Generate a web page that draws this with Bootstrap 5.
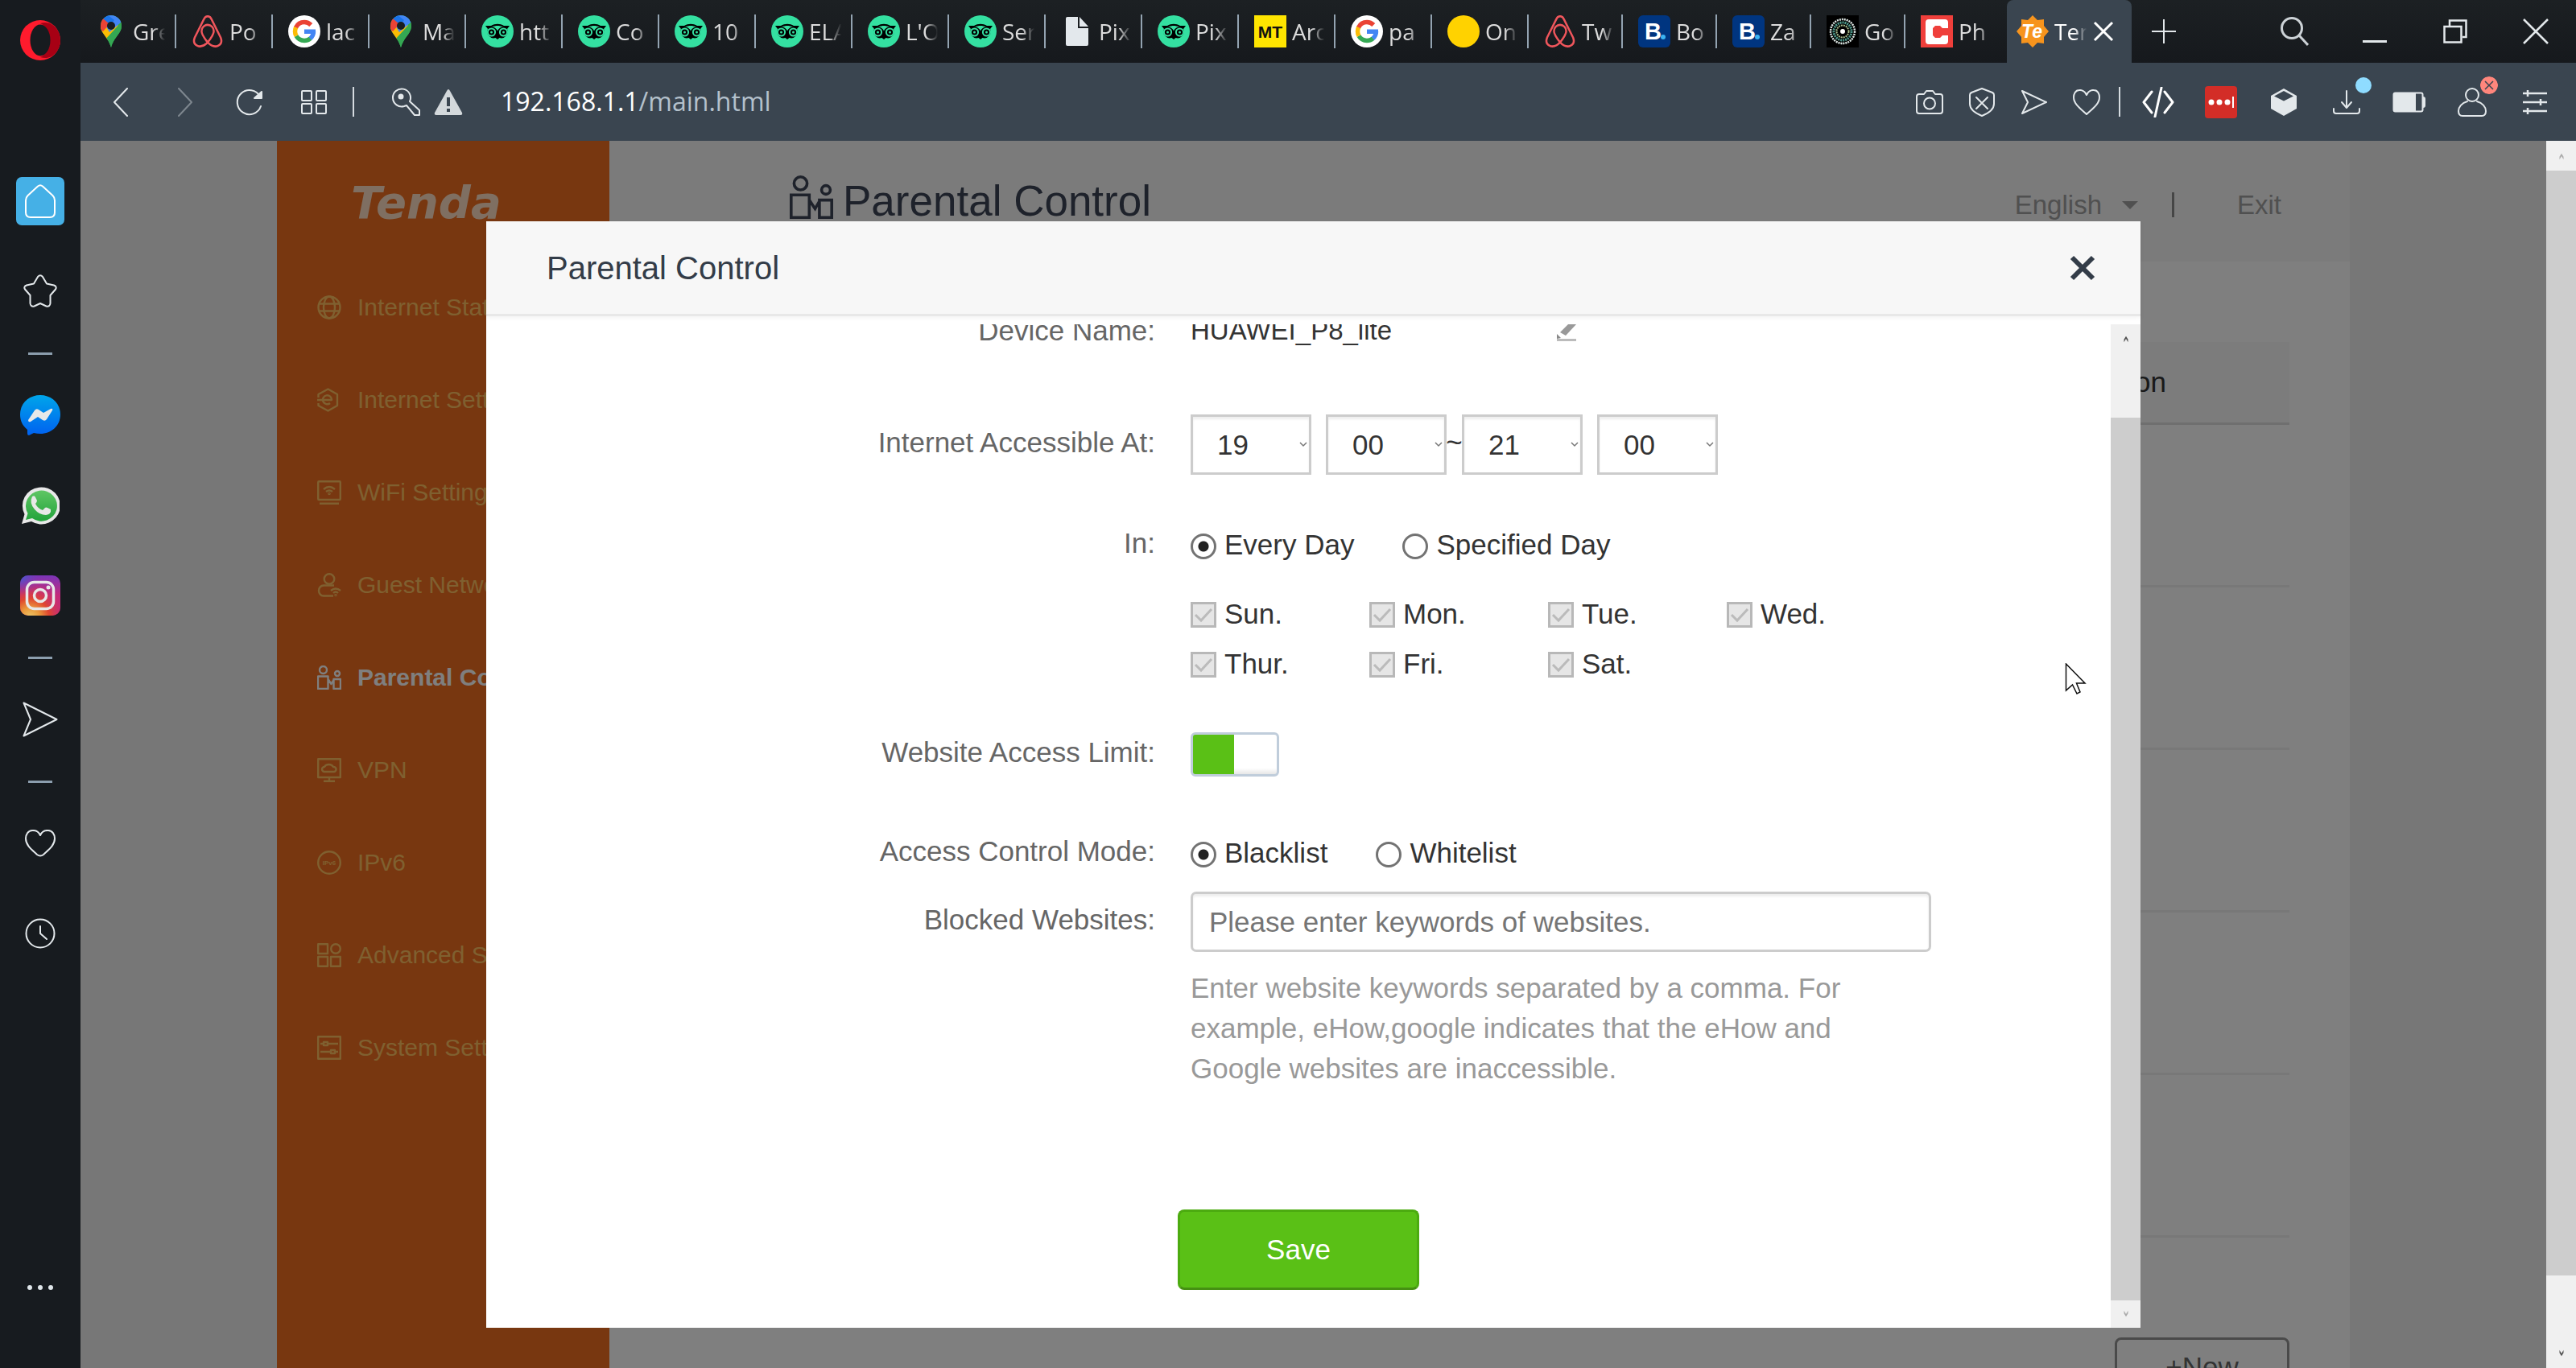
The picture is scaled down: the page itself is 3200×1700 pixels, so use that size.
<!DOCTYPE html>
<html lang="en">
<head>
<meta charset="utf-8">
<meta name="viewport" content="width=device-width, initial-scale=1">
<title>Tenda | Parental Control</title>
<link href="https://cdn.jsdelivr.net/npm/bootstrap@5.3.0/dist/css/bootstrap.min.css" rel="stylesheet">
<style>
  :root { --chrome: #3a4550; --ink: #e3e8eb; }
  body { font-family: "Liberation Sans", Arial, sans-serif; font-size: 35px; line-height: 50px; background: #171b1f; color: #333; }
  svg { display: block; flex: none; }
  button { font: inherit; }
  .plain-btn { background: none; border: 0; padding: 0; color: inherit; display: flex; align-items: center; justify-content: center; flex: none; }
  .line-icon { fill: none; stroke: var(--ink); stroke-width: 2; stroke-linejoin: round; stroke-linecap: round; }

  /* browser side bar */
  .side-rail { width: 100px; background: #171b1f; padding-bottom: 44px; }
  .rail-logo { height: 100px; }
  .rail-item { width: 100px; height: 112px; }
  .rail-item.home { height: 150px; margin-top: 75px; margin-bottom: -19px; }
  .home-tile { width: 60px; height: 60px; border-radius: 7px; background: #45b0e6; display: flex; align-items: center; justify-content: center; }
  .rail-rule { width: 30px; height: 3px; margin: 20px 0 19px; background: #8c9eae; flex: none; }

  /* tab strip */
  .tab-strip { height: 78px; background: linear-gradient(#1c2023, #16191d); font-family: "Open Sans", "Noto Sans", sans-serif; font-size: 28px; line-height: 40px; color: #dcdcdc; }
  .site-tab { width: 120px; padding-left: 19px; gap: 7px; position: relative; flex: none; color: inherit; text-decoration: none; }
  .site-tab::after { content: ""; position: absolute; right: 0; top: 18px; height: 42px; width: 2px; background: #93a3b1; }
  .site-tab:first-child { width: 119px; padding-left: 18px; }
  .site-tab.tight { width: 117px; }
  .site-tab.last { width: 126px; }
  .site-tab.current { width: 155px; padding-left: 12px; background: var(--chrome); color: #fff; border-radius: 8px 8px 0 0; }
  .site-tab.last::after, .site-tab.current::after { display: none; }
  .tab-text { width: 41px; overflow: hidden; white-space: nowrap; -webkit-mask-image: linear-gradient(90deg, #000 60%, transparent 98%); mask-image: linear-gradient(90deg, #000 60%, transparent 98%); }
  .add-tab { width: 80px; }
  .win-btn { width: 100px; }

  /* address bar */
  .address-bar { height: 97px; background: var(--chrome); padding: 0 12px 0 10px; }
  .nav-btn { width: 80px; height: 97px; }
  .page-btn { width: 65px; height: 97px; }
  .ext-btn { width: 78px; height: 97px; position: relative; }
  .bar-rule { width: 2px; height: 37px; background: #d5dbe0; flex: none; }
  .key-btn { margin-left: 47px; }
  .warn-btn { margin-left: 16px; }
  .url-box { margin-left: 47px; font-family: "Open Sans", "Noto Sans", sans-serif; font-size: 32px; line-height: 44px; color: #fff; padding-bottom: 2px; }
  .url-box span { color: #b4c1cc; }
  .dot-badge { position: absolute; border-radius: 50%; }
  .dot-badge.blue { width: 20px; height: 20px; left: 50px; top: 18px; background: #8fdcff; }
  .dot-badge.red { left: 49px; top: 17px; }

  /* router page */
  .web-view { background: #efefef; min-height: 0; }
  .router { max-width: 2575px; }
  .router-nav { width: 413px; background: #f06e20; }
  .brand-word { height: 150px; padding: 4px 0 0 92px; font-family: "DejaVu Sans", sans-serif; font-weight: 700; font-style: italic; font-size: 56px; line-height: 60px; color: #ffdfc4; }
  .menu-link { height: 115px; padding: 0 0 2px 50px; gap: 20px; font-size: 30px; line-height: 40px; white-space: nowrap; color: #ffc060; text-decoration: none; }
  .menu-link svg { fill: none; stroke: currentColor; stroke-width: 2.4; stroke-linejoin: round; }
  .menu-link.active { color: #fff; font-weight: 700; }
  .router-body { background: #fff; }
  .router-head { height: 150px; background: #f7f7f7; padding: 0 85px 0 224px; }
  .router-head h1 { font-size: 53px; line-height: 60px; color: #3c4456; }
  .head-icon { color: #3c4456; stroke-width: 2; margin-bottom: 10px; }
  .account-links { font-size: 33px; line-height: 40px; color: #a0a0a0; padding-top: 9px; }
  .account-links a { color: inherit; text-decoration: none; }
  .lang-caret { border: 10px solid transparent; border-top-color: #a0a0a0; border-bottom: 0; margin-left: 25px; }
  .account-rule { width: 3px; height: 31px; background: #8c8c8c; margin: 0 78px 0 42px; }
  .client-area { padding: 100px 75px 0; }
  .client-table { width: 100%; border-collapse: collapse; }
  .client-table th { height: 101px; background: #f8f8f8; border-bottom: 3px solid #dedede; font-weight: 400; text-align: center; padding: 0; }
  .client-table th:last-child { width: 460px; }
  .client-table td { height: 202px; border-bottom: 3px solid #f0f0f0; }
  .new-btn { width: 217px; height: 75px; margin-top: 124px; border: 3px solid #949494; border-radius: 8px; background: none; color: #666; padding: 0; }

  /* dialog */
  .shade { background: rgba(0, 0, 0, .5); padding: 100px 50px 50px; }
  .dialog { width: 100%; max-width: 2055px; height: 100%; background: #fff; }
  .dialog-head { height: 118px; background: #f7f7f7; border-bottom: 3px solid #e8e8e8; padding: 0 56px 0 75px; box-shadow: 0 2px 6px rgba(0, 0, 0, .05); }
  .dialog-head h2 { font-size: 40px; line-height: 50px; color: #333c48; }
  .dialog-body { margin-top: 10px; min-height: 0; }
  .dialog-form { margin-top: -17px; }
  .form-line { display: flex; gap: 44px; }
  .line-label { width: 831px; text-align: right; color: #666; flex: none; }
  .line-label.boxed { padding-top: 10px; }
  .line-label.choice { line-height: 58px; }
  .line-field { width: 920px; }
  .device-name { width: 455px; font-size: 33px; }
  .gap-a { margin-top: 79px; } .gap-b { margin-top: 56px; } .gap-c { margin-top: 54px; } .gap-d { margin-top: 64px; } .gap-e { margin-top: 17px; }
  .time-select { width: 150px; height: 75px; padding: 0 10px 0 30px; font-size: 35px; line-height: 50px; color: #333; border: 3px solid #ccc; border-radius: 0; appearance: none;
    background: #fff url("data:image/svg+xml,%3Csvg xmlns='http://www.w3.org/2000/svg' width='10' height='7'%3E%3Cpath d='M1 1l4 4 4-4' fill='none' stroke='%23777' stroke-width='1.5'/%3E%3C/svg%3E") no-repeat right 2px center; box-shadow: inset 0 3px 3px rgba(0, 0, 0, .07); }
  .time-select.minute { margin-left: 18px; }
  .tilde { width: 19px; line-height: 70px; display: flex; justify-content: center; }
  .pick { display: flex; align-items: center; height: 62px; }
  .pick input { appearance: none; width: 32px; height: 32px; margin: 3px 10px 0 0; flex: none; background: #fff; border: 3px solid #737373; opacity: 1; }
  .pick input[type=radio] { border-radius: 50%; }
  .pick input[type=radio]:checked { background: radial-gradient(circle, #222 6px, #fff 7px); }
  .pick input[type=checkbox] { margin-top: 2px; border-color: #b8b8b8; background: #e6e6e6 url("data:image/svg+xml,%3Csvg xmlns='http://www.w3.org/2000/svg' width='26' height='26'%3E%3Cpath d='M3 13l7 7L23 6' fill='none' stroke='%23bbb' stroke-width='3'/%3E%3C/svg%3E") center no-repeat; }
  .mode-row { display: flex; gap: 60px; }
  .day-grid { display: grid; grid-template-columns: repeat(4, 222px); margin-top: 24px; }
  .limit-switch { appearance: none; display: block; width: 110px; height: 55px; margin: 0; border: 3px solid #c0cddb; border-radius: 6px; background: linear-gradient(90deg, #5ac016 51px, transparent 51px), linear-gradient(#fff 85%, #e6e6e6); }
  .site-box { display: block; width: 100%; height: 75px; padding: 0 20px; font-size: 35px; border: 3px solid #ccc; border-radius: 7px; box-shadow: inset 0 3px 3px rgba(0, 0, 0, .07); }
  .site-box::placeholder { color: #757575; opacity: 1; }
  .hint { max-width: 880px; margin: 20px 0 0; color: #999; }
  .save-btn { width: 300px; height: 100px; margin: 150px auto 0; display: block; padding: 0; color: #fff; background: #5ac016; border: 3px solid #4cab10; border-bottom-color: #459012; border-radius: 8px; }

  /* scroll bars */
  .bar-track { width: 37px; background: #f0f0f0; flex: none; color: #505050; }
  .bar-thumb { width: 37px; background: #cdcdcd; flex: 1 1 auto; }
  .track-end { height: 37px; display: flex; align-items: center; justify-content: center; flex: none; }
  .track-end.short { height: 34px; }
  .track-end.run-top { height: 116px; align-items: flex-start; padding-top: 13px; }
  .track-end.run-bottom { height: 115px; align-items: flex-end; padding-bottom: 13px; }
  .faint { color: #aaa; }
  .flip { transform: rotate(180deg); }
  .pointer { position: absolute; left: 2465px; top: 649px; }
</style>
<script src="https://cdn.jsdelivr.net/npm/bootstrap@5.3.0/dist/js/bootstrap.bundle.min.js"></script>
</head>
<body class="d-flex vh-100 overflow-hidden">

<svg width="0" height="0" class="position-absolute">
  <defs>
    <linearGradient id="msg" x1="0" y1="0" x2="0" y2="1"><stop offset="0" stop-color="#00a5ea"/><stop offset="1" stop-color="#0061f0"/></linearGradient>
    <linearGradient id="wa" x1="0" y1="0" x2="0" y2="1"><stop offset="0" stop-color="#5fc664"/><stop offset="1" stop-color="#22a33b"/></linearGradient>
    <linearGradient id="igbase" x1="0" y1="0" x2="0" y2="1"><stop offset="0" stop-color="#7a35b8"/><stop offset=".5" stop-color="#c42a7c"/><stop offset="1" stop-color="#c42a7c"/></linearGradient>
    <radialGradient id="igwarm" cx=".25" cy="1.05" r=".95"><stop offset="0" stop-color="#ecc76a"/><stop offset=".25" stop-color="#ea9a3c"/><stop offset=".5" stop-color="#e0462f"/><stop offset="1" stop-color="#c42a7c" stop-opacity="0"/></radialGradient>
    <radialGradient id="igblue" cx="0" cy="0" r=".5"><stop offset="0" stop-color="#3f5fd0"/><stop offset="1" stop-color="#7a35b8" stop-opacity="0"/></radialGradient>
    <clipPath id="pinclip"><path d="M20 0a13 13 0 0 1 13 13c0 10-9 13-13 27C16 26 7 23 7 13A13 13 0 0 1 20 0z"/></clipPath>
    <symbol id="pin" viewBox="0 0 40 40"><g clip-path="url(#pinclip)"><path fill="#34a853" d="M0 0h40v40H0z"/><path fill="#fbbc04" d="M4 16L14 6l18 8L12 34z"/><path fill="#34a853" d="M12 31L34 7v33H12z"/><path fill="#4285f4" d="M9 6L17-2h20l-5 11-14 12z"/><path fill="#1a73e8" d="M9 6L15-1l9 7-7 8z"/><path fill="#ea4335" d="M5 4h5l8 7-8 9-5-4z"/></g><circle cx="20" cy="13" r="5" fill="#191d21"/></symbol>
    <symbol id="airbnb" viewBox="0 0 40 40"><path fill="none" stroke="#f0565c" stroke-width="2.6" d="M20 34c-5-6-8-10-8-14a6 6 0 0 1 16 0c0 4-3 8-8 14zm0 0c-5 5-10 6-14 4-4-2-5-5-3-10L15 5c2-5 8-5 10 0l12 23c2 5 1 8-3 10-4 2-9 1-14-4z" transform="translate(1 0) scale(.95 .99)"/></symbol>
    <symbol id="google" viewBox="0 0 40 40"><circle cx="20" cy="20" r="20" fill="#fff"/><g fill="none" stroke-width="5.500"><circle cx="20" cy="20" r="11.500" pathLength="360" stroke="#4285f4" stroke-dasharray="52 308"/><circle cx="20" cy="20" r="11.500" pathLength="360" stroke="#34a853" stroke-dasharray="100 260" stroke-dashoffset="-50"/><circle cx="20" cy="20" r="11.500" pathLength="360" stroke="#fbbc05" stroke-dasharray="58 302" stroke-dashoffset="-150"/><circle cx="20" cy="20" r="11.500" pathLength="360" stroke="#ea4335" stroke-dasharray="110 250" stroke-dashoffset="-206"/></g><path fill="#4285f4" d="M20 17.500h14v5.500H20z"/></symbol>
    <symbol id="owl" viewBox="0 0 40 40"><circle cx="20" cy="20" r="20" fill="#34e0a1"/><path d="M5 13h7c5-3 11-3 16 0h7l-3 4a8 8 0 0 1-9.500 11L20 30l-2.500-2A8 8 0 0 1 8 17z"/><circle cx="12.500" cy="21" r="5.600" fill="#34e0a1"/><circle cx="27.500" cy="21" r="5.600" fill="#34e0a1"/><path d="M13 14.500c5-2 9-2 14 0-3 0-6 2-7 5-1-3-4-5-7-5z" fill="#34e0a1"/><circle cx="12.500" cy="21" r="3.600"/><circle cx="27.500" cy="21" r="3.600"/><circle cx="12.500" cy="21" r="1.500" fill="#34e0a1"/><circle cx="27.500" cy="21" r="1.500" fill="#34e0a1"/></symbol>
    <symbol id="booking" viewBox="0 0 40 40"><rect width="40" height="40" rx="6" fill="#003580"/><text x="8" y="30" font-family="Liberation Sans" font-weight="700" font-size="29" fill="#fff">B</text><circle cx="31" cy="27" r="3" fill="#3bb3f2"/></symbol>
    <symbol id="family" viewBox="0 0 30 30"><g fill="none" stroke="currentColor"><circle cx="7.500" cy="5.500" r="4.500"/><circle cx="25" cy="10" r="3"/><path d="M1 13.500h12.500V29H1zM20.500 17H29v12h-8.500zM13.500 17l4 6 3.500-6"/></g></symbol>
    <symbol id="caret-up" viewBox="0 0 8 12"><path d="M1 11V7l3-5 3 5v4L4 6z" fill="currentColor"/></symbol>
  </defs>
</svg>

<aside class="side-rail d-flex flex-column align-items-center flex-shrink-0">
  <div class="rail-logo d-flex align-items-center">
    <svg width="50" height="50" viewBox="0 0 50 50"><ellipse cx="25" cy="25" rx="25" ry="25" fill="#ff1b2d"/><path d="M25 4c14-5 25 8 25 21S39 51 25 46c7-3 12-11 12-21S32 7 25 4z" fill="#a70014"/><ellipse cx="25" cy="25" rx="12.500" ry="19.500" fill="#171b1f"/></svg>
  </div>
  <button class="plain-btn rail-item home" aria-label="Start page"><span class="home-tile"><svg class="line-icon" width="38" height="42" viewBox="0 0 38 42"><path d="M16 2.500q3-2.500 6 0L34.500 14q2.500 2.500 2.500 6v15q0 6-6 6H7q-6 0-6-6V20q0-3.500 2.500-6z" stroke="#fff"/></svg></span></button>
  <button class="plain-btn rail-item" aria-label="Bookmarks"><svg class="line-icon" width="42" height="42" viewBox="0 0 42 42"><path d="M18 3q3-3.500 6 0l5 8.500 9 2q4 1.500 2 5l-6.500 7.500v10q-.5 4.500-5 3.500L21 36l-7.500 3.500q-4.500 1-5-3.500V26L2 18.500q-2-3.500 2-5l9-2z"/></svg></button>
  <div class="rail-rule"></div>
  <button class="plain-btn rail-item" aria-label="Messenger"><svg width="50" height="50" viewBox="0 0 50 50"><path fill="url(#msg)" d="M25 0c14 0 25 10 25 24S39 48 25 48q-4 0-8-1l-6 3q-2 0-2-2v-5C3 38 0 32 0 24 0 10 11 0 25 0z"/><path fill="#e8e8e8" d="M10 31l8-12q2-3 5-1l6 4 9-5q3-1 2 2l-7 11q-2 3-5 1l-6-4-9 6q-3 1-3-2z"/></svg></button>
  <button class="plain-btn rail-item" aria-label="WhatsApp"><svg width="48" height="48" viewBox="0 0 48 48"><path fill="#e8e8e8" d="M1 47l3.500-12A23.500 23 0 1 1 13 44z"/><path fill="url(#wa)" d="M6 42l2.500-8A19.500 19 0 1 1 14 40z"/><path fill="#e8e8e8" d="M14 13q3-2 4 1l2 4q0 2-2 4 3 6 9 8l3-3q1-1 3 0l4 2q1 6-6 7-8 0-14-7-7-8-3-16z"/></svg></button>
  <button class="plain-btn rail-item" aria-label="Instagram"><svg width="50" height="50" viewBox="0 0 50 50"><rect width="50" height="50" rx="10" fill="url(#igbase)"/><rect width="50" height="50" rx="10" fill="url(#igwarm)"/><rect width="50" height="50" rx="10" fill="url(#igblue)"/><g fill="none" stroke="#e8e8e8" stroke-width="3.500"><rect x="8.500" y="8.500" width="33" height="33" rx="9"/><circle cx="25" cy="25" r="7.500"/></g><circle cx="35" cy="15" r="2.500" fill="#e8e8e8"/></svg></button>
  <div class="rail-rule"></div>
  <button class="plain-btn rail-item" aria-label="Flow"><svg class="line-icon" width="44" height="44" viewBox="0 0 44 44"><path d="M1.500 1.500L42.500 22 1.500 42.500 10 22z"/></svg></button>
  <div class="rail-rule"></div>
  <button class="plain-btn rail-item" aria-label="Favourites"><svg class="line-icon" width="38" height="34" viewBox="0 0 38 34"><path d="M19 7C16 0 10 1 9 1 4 1 1 6 1 11c0 9 9 15 14 20q4 3 8 0c5-5 14-11 14-20 0-5-3-10-8-10-1 0-7-1-10 6z"/></svg></button>
  <button class="plain-btn rail-item" aria-label="History"><svg class="line-icon" width="38" height="38" viewBox="0 0 38 38"><circle cx="19" cy="19" r="17.500"/><path d="M19 10v9l8 7"/></svg></button>
  <button class="plain-btn rail-item mt-auto" aria-label="More"><svg width="34" height="8" viewBox="0 0 34 8" fill="#dfe6ea"><circle cx="4" cy="4" r="3"/><circle cx="17" cy="4" r="3"/><circle cx="30" cy="4" r="3"/></svg></button>
</aside>

<div class="d-flex flex-column flex-fill overflow-hidden">
  <nav class="tab-strip d-flex flex-shrink-0" aria-label="Open tabs">
    <a href="#" class="site-tab d-flex align-items-center"><svg width="40" height="40"><use href="#pin"/></svg><span class="tab-text">Gre</span></a>
    <a href="#" class="site-tab d-flex align-items-center"><svg width="40" height="40"><use href="#airbnb"/></svg><span class="tab-text">Po</span></a>
    <a href="#" class="site-tab d-flex align-items-center"><svg width="40" height="40"><use href="#google"/></svg><span class="tab-text">lac</span></a>
    <a href="#" class="site-tab d-flex align-items-center"><svg width="40" height="40"><use href="#pin"/></svg><span class="tab-text">Ma</span></a>
    <a href="#" class="site-tab d-flex align-items-center"><svg width="40" height="40"><use href="#owl"/></svg><span class="tab-text">htt</span></a>
    <a href="#" class="site-tab d-flex align-items-center"><svg width="40" height="40"><use href="#owl"/></svg><span class="tab-text">Co</span></a>
    <a href="#" class="site-tab d-flex align-items-center"><svg width="40" height="40"><use href="#owl"/></svg><span class="tab-text">10</span></a>
    <a href="#" class="site-tab d-flex align-items-center"><svg width="40" height="40"><use href="#owl"/></svg><span class="tab-text">ELA</span></a>
    <a href="#" class="site-tab d-flex align-items-center"><svg width="40" height="40"><use href="#owl"/></svg><span class="tab-text">L'O</span></a>
    <a href="#" class="site-tab d-flex align-items-center"><svg width="40" height="40"><use href="#owl"/></svg><span class="tab-text">Ser</span></a>
    <a href="#" class="site-tab d-flex align-items-center"><svg width="40" height="40" viewBox="0 0 40 40" fill="#e3e8ec"><path d="M8 2h13v14h13v20q0 2-2 2H8q-2 0-2-2V4q0-2 2-2z"/><path d="M23 2l11 12H23z"/></svg><span class="tab-text">Pix</span></a>
    <a href="#" class="site-tab d-flex align-items-center"><svg width="40" height="40"><use href="#owl"/></svg><span class="tab-text">Pix</span></a>
    <a href="#" class="site-tab d-flex align-items-center"><svg width="40" height="40" viewBox="0 0 40 40"><path fill="#ffe500" d="M0 0h40v40H0z"/><text x="20" y="28" text-anchor="middle" font-family="Liberation Sans" font-weight="700" font-size="21" fill="#111">MT</text></svg><span class="tab-text">Arc</span></a>
    <a href="#" class="site-tab d-flex align-items-center"><svg width="40" height="40"><use href="#google"/></svg><span class="tab-text">pa</span></a>
    <a href="#" class="site-tab d-flex align-items-center"><svg width="40" height="40" viewBox="0 0 40 40"><circle cx="20" cy="20" r="20" fill="#ffd200"/></svg><span class="tab-text">On</span></a>
    <a href="#" class="site-tab tight d-flex align-items-center"><svg width="40" height="40"><use href="#airbnb"/></svg><span class="tab-text">Tw</span></a>
    <a href="#" class="site-tab tight d-flex align-items-center"><svg width="40" height="40"><use href="#booking"/></svg><span class="tab-text">Bo</span></a>
    <a href="#" class="site-tab tight d-flex align-items-center"><svg width="40" height="40"><use href="#booking"/></svg><span class="tab-text">Za</span></a>
    <a href="#" class="site-tab tight d-flex align-items-center"><svg width="40" height="40" viewBox="0 0 40 40"><path d="M0 0h40v40H0z"/><circle cx="20" cy="20" r="15" fill="none" stroke="#dfe9e6" stroke-width="2.500" stroke-dasharray="2 1"/><circle cx="20" cy="20" r="11" fill="none" stroke="#4f9a8c" stroke-width="3" stroke-dasharray="2 1"/><circle cx="20" cy="20" r="7.500" fill="none" stroke="#a9bd8c" stroke-width="2" stroke-dasharray="2 1"/><circle cx="20" cy="20" r="3" fill="#fff"/></svg><span class="tab-text">Go</span></a>
    <a href="#" class="site-tab last d-flex align-items-center"><svg width="40" height="40" viewBox="0 0 40 40"><path fill="#ef3f3b" d="M0 0h40v40H0z"/><path fill="#fff" d="M10 5h20q4 0 4 4v7h-7l-3-3h-6l-3 3v9l3 3h6l3-3h7v7q0 4-4 4H10q-4 0-4-4V9q0-4 4-4z"/></svg><span class="tab-text">Ph</span></a>
    <div class="site-tab current d-flex align-items-center"><svg width="40" height="40" viewBox="0 0 40 40"><path fill="#f7941d" d="M20 0l6 6 8-1 0 8 6 7-6 7 0 8-8-1-6 6-6-6-8 1 0-8-6-7 6-7 0-8 8 1z"/><text x="19" y="28" text-anchor="middle" font-family="Liberation Sans" font-style="italic" font-weight="700" font-size="23" fill="#fff">Te</text></svg><span class="tab-text">Ten</span><button class="plain-btn" aria-label="Close tab"><svg width="26" height="26" viewBox="0 0 26 26"><path d="M2 2l22 22M24 2L2 24" stroke="#fff" stroke-width="3"/></svg></button></div>
    <button class="plain-btn add-tab" aria-label="New tab"><svg width="30" height="30" viewBox="0 0 30 30"><path d="M15 0v30M0 15h30" stroke="#e3e8eb" stroke-width="2"/></svg></button>
    <div class="d-flex ms-auto">
      <button class="plain-btn win-btn" aria-label="Search tabs"><svg width="36" height="38" viewBox="0 0 36 38" fill="none" stroke="#ccd2d6" stroke-width="3"><circle cx="15" cy="15" r="12.500"/><path d="M24 24l11 12"/></svg></button>
      <button class="plain-btn win-btn" aria-label="Minimise"><svg width="30" height="28" viewBox="0 0 30 28"><path d="M0 25h30v3H0z" fill="#e3e8eb"/></svg></button>
      <button class="plain-btn win-btn" aria-label="Restore"><svg width="30" height="30" viewBox="0 0 30 30" fill="none" stroke="#e3e8eb" stroke-width="2.500"><path d="M1.500 9h21v19.500h-21zM8 8V1.500h20.500V22H24"/></svg></button>
      <button class="plain-btn win-btn" aria-label="Close window"><svg width="32" height="32" viewBox="0 0 32 32"><path d="M1 1l30 30M31 1L1 31" stroke="#e3e8eb" stroke-width="2.500"/></svg></button>
    </div>
  </nav>

  <div class="address-bar d-flex align-items-center flex-shrink-0">
    <button class="plain-btn nav-btn" aria-label="Back"><svg class="line-icon" width="20" height="36" viewBox="0 0 20 36"><path d="M18 1L2 18l16 17"/></svg></button>
    <button class="plain-btn nav-btn" aria-label="Forward"><svg class="line-icon" width="20" height="36" viewBox="0 0 20 36" opacity=".4"><path d="M2 1l16 17L2 35"/></svg></button>
    <button class="plain-btn nav-btn" aria-label="Reload"><svg class="line-icon" width="34" height="34" viewBox="0 0 34 34"><path d="M31 22a15 15 0 1 1-1-12"/><path d="M32 4v8h-9z" fill="#e3e8eb"/></svg></button>
    <button class="plain-btn nav-btn" aria-label="Speed dial"><svg class="line-icon" width="32" height="30" viewBox="0 0 32 30"><rect x="1" y="1" width="12" height="12" rx="1"/><rect x="19" y="1" width="12" height="12" rx="1"/><rect x="1" y="17" width="12" height="12" rx="1"/><rect x="19" y="17" width="12" height="12" rx="1"/></svg></button>
    <div class="bar-rule ms-2"></div>
    <button class="plain-btn key-btn" aria-label="Passwords"><svg class="line-icon" width="36" height="36" viewBox="0 0 36 36"><path d="M22 17a11 11 0 1 0-7 6l3-1 10 12h6v-6z"/><circle cx="11" cy="11" r="2.500" fill="#e3e8eb"/></svg></button>
    <button class="plain-btn warn-btn" aria-label="Not secure"><svg width="36" height="34" viewBox="0 0 36 34"><path fill="#d3d8db" d="M18 1q1 0 2 2l15 27q1 3-2 3H3q-3 0-2-3L16 3q1-2 2-2z"/><path d="M18 11v11M18 25v4" stroke="#3a4550" stroke-width="4"/></svg></button>
    <div class="url-box">192.168.1.1<span>/main.html</span></div>
    <div class="d-flex align-items-center ms-auto">
      <button class="plain-btn page-btn" aria-label="Snapshot"><svg class="line-icon" width="34" height="30" viewBox="0 0 34 30"><path d="M4 5h6l3-4h8l3 4h6q3 0 3 3v18q0 3-3 3H4q-3 0-3-3V8q0-3 3-3z"/><circle cx="17" cy="16.500" r="7"/></svg></button>
      <button class="plain-btn page-btn" aria-label="Ad blocker"><svg class="line-icon" width="32" height="36" viewBox="0 0 32 36"><path d="M16 1l13 5q2 1 2 3v11q0 9-15 15Q1 29 1 20V9q0-2 2-3zM9 12l14 14M23 12L9 26"/></svg></button>
      <button class="plain-btn page-btn" aria-label="Send to Flow"><svg class="line-icon" width="32" height="30" viewBox="0 0 32 30"><path d="M1 1l30 14L1 29l7-14z"/></svg></button>
      <button class="plain-btn page-btn" aria-label="Save page"><svg class="line-icon" width="34" height="32" viewBox="0 0 34 32"><path d="M17 7C14 0 8 1 8 1 3 1 1 6 1 10c0 9 11 16 16 21 5-5 16-12 16-21 0-4-2-9-7-9 0 0-6-1-9 6z"/></svg></button>
      <div class="bar-rule mx-2"></div>
      <button class="plain-btn ext-btn" aria-label="Code viewer"><svg class="line-icon" width="40" height="38" viewBox="0 0 40 38"><path d="M12 6L2 19l10 13M28 6l10 13-10 13M24 1l-8 36" stroke="#fff" stroke-width="3"/></svg></button>
      <button class="plain-btn ext-btn" aria-label="LastPass"><svg width="40" height="40" viewBox="0 0 40 40"><rect width="40" height="40" rx="4" fill="#d32d27"/><g fill="#fff"><circle cx="8" cy="20" r="3.500"/><circle cx="18" cy="20" r="3.500"/><circle cx="28" cy="20" r="3.500"/><path d="M34 13h2v14h-2z"/></g></svg></button>
      <button class="plain-btn ext-btn" aria-label="Extensions"><svg width="34" height="34" viewBox="0 0 34 34"><path fill="#e3e8eb" d="M17 0l16 9v16l-16 9-16-9V9z"/><path fill="#3a4550" d="M17 3l12 6.500-12 6-12-6z"/></svg></button>
      <button class="plain-btn ext-btn" aria-label="Downloads"><svg class="line-icon" width="34" height="30" viewBox="0 0 34 30"><path d="M17 1v20M11 15l6 7 6-7M1 23v3q0 3 3 3h26q3 0 3-3v-3"/></svg><span class="dot-badge blue"></span></button>
      <button class="plain-btn ext-btn" aria-label="Battery saver"><svg width="42" height="26" viewBox="0 0 42 26"><rect x="1.500" y="1.500" width="36" height="23" rx="2" fill="none" stroke="#e3e8eb" stroke-width="2"/><path d="M2 1h27v24H2zM38 6q3 0 3 3v8q0 3-3 3z" fill="#e3e8eb"/></svg></button>
      <button class="plain-btn ext-btn" aria-label="Account"><svg class="line-icon" width="36" height="36" viewBox="0 0 36 36"><circle cx="18" cy="9" r="8"/><path d="M12 17C5 19 1 24 1 29q0 6 5 6h24q5 0 5-6c0-5-4-10-11-12"/></svg><svg class="dot-badge red" width="22" height="22" viewBox="0 0 22 22"><circle cx="11" cy="11" r="11" fill="#ff867c"/><path d="M6 6l10 10M16 6L6 16" stroke="#3a4550" stroke-width="1.500"/></svg></button>
      <button class="plain-btn ext-btn" aria-label="Easy setup"><svg width="30" height="30" viewBox="0 0 30 30"><path d="M0 4h30M0 15h30M0 26h30M6 0v8M22 11v8M6 22v8" stroke="#e3e8eb" stroke-width="2.500"/></svg></button>
    </div>
  </div>

  <div class="web-view d-flex flex-fill overflow-hidden">
    <div class="flex-fill position-relative overflow-hidden">
      <div class="router d-flex h-100 mx-auto">
        <nav class="router-nav flex-shrink-0">
          <div class="brand-word d-flex align-items-center">Tenda</div>
          <a href="#" class="menu-link d-flex align-items-center"><svg width="30" height="30" viewBox="0 0 30 30"><circle cx="15" cy="15" r="13.500"/><ellipse cx="15" cy="15" rx="7" ry="13.500"/><path d="M2.500 10.500h25M2.500 19.500h25"/></svg><span>Internet Status</span></a>
          <a href="#" class="menu-link d-flex align-items-center"><svg width="30" height="30" viewBox="0 0 30 30"><path d="M1.500 12V8L13.500 1.500 25 8v14l-11.500 6.500L1.500 22v-3M0 15h18a5.500 5.500 0 1 0-2 4"/></svg><span>Internet Settings</span></a>
          <a href="#" class="menu-link d-flex align-items-center"><svg width="30" height="30" viewBox="0 0 30 30"><rect x="1.200" y="1.200" width="27.600" height="22.800" rx="1"/><path d="M3 28.800h24M8 11q7-6 14 0M11 14q4-3 8 0"/><circle cx="15" cy="16.500" r=".6"/></svg><span>WiFi Settings</span></a>
          <a href="#" class="menu-link d-flex align-items-center"><svg width="30" height="30" viewBox="0 0 30 30"><circle cx="15" cy="7.500" r="6.300"/><path d="M21 15.500H8a6 6.500 0 0 0 0 13h12M17 22q6-5 12 0M20 25q3-3 6 0"/><circle cx="23" cy="27.500" r=".5"/></svg><span>Guest Network</span></a>
          <a href="#" class="menu-link active d-flex align-items-center"><svg width="30" height="30"><use href="#family"/></svg><span>Parental Control</span></a>
          <a href="#" class="menu-link d-flex align-items-center"><svg width="30" height="30" viewBox="0 0 30 30"><path d="M1.200 1.200h27.600V24H1.200zM15 24v5M8 28.800h14"/><path d="M9 17a3 3 0 0 1 0-6 6 5 0 0 1 11 0 3 3 0 0 1 1 6z"/></svg><span>VPN</span></a>
          <a href="#" class="menu-link d-flex align-items-center"><svg width="30" height="30" viewBox="0 0 30 30"><circle cx="15" cy="15" r="13.800"/><text x="15" y="18" text-anchor="middle" font-family="Liberation Sans" font-weight="700" font-size="8" fill="currentColor" stroke="none">IPv6</text></svg><span>IPv6</span></a>
          <a href="#" class="menu-link d-flex align-items-center"><svg width="30" height="30" viewBox="0 0 30 30"><path d="M1.200 1.200H13V13H1.200zM1.200 17H13v11.800H1.200zM17 17h11.800v11.800H17z"/><circle cx="23" cy="7" r="5.800"/></svg><span>Advanced Settings</span></a>
          <a href="#" class="menu-link d-flex align-items-center"><svg width="30" height="30" viewBox="0 0 30 30"><path d="M1.200 1.200h27.600v27.600H1.200zM4 10h4M14 10h12M4 20h13M23 20h3M8 8h5v4H8zM17 18h5v4h-5z"/></svg><span>System Settings</span></a>
        </nav>
        <div class="router-body flex-fill">
          <header class="router-head d-flex align-items-center justify-content-between">
            <div class="d-flex align-items-center gap-2">
              <svg class="head-icon me-1" width="54" height="54"><use href="#family"/></svg>
              <h1 class="m-0 fw-normal">Parental Control</h1>
            </div>
            <div class="account-links d-flex align-items-center">
              <button class="plain-btn">English<span class="lang-caret"></span></button>
              <span class="account-rule"></span>
              <a href="#">Exit</a>
            </div>
          </header>
          <div class="client-area">
            <table class="client-table">
              <thead><tr><th></th><th>Operation</th></tr></thead>
              <tbody><tr><td></td><td></td></tr><tr><td></td><td></td></tr><tr><td></td><td></td></tr><tr><td></td><td></td></tr><tr><td></td><td></td></tr></tbody>
            </table>
            <div class="d-flex justify-content-end"><button class="new-btn">+New</button></div>
          </div>
        </div>
      </div>

      <div class="shade position-absolute top-0 start-0 w-100 h-100">
        <section class="dialog d-flex flex-column mx-auto" role="dialog" aria-labelledby="dlg-title">
          <div class="dialog-head d-flex align-items-center justify-content-between flex-shrink-0">
            <h2 class="m-0 fw-normal" id="dlg-title">Parental Control</h2>
            <button class="plain-btn" aria-label="Close"><svg width="32" height="32" viewBox="0 0 32 32"><path d="M3 3l26 26M29 3L3 29" stroke="#333c48" stroke-width="6"/></svg></button>
          </div>
          <div class="dialog-body d-flex flex-fill overflow-hidden">
            <form class="dialog-form flex-fill" onsubmit="return false">
              <div class="form-line">
                <div class="line-label">Device Name:</div>
                <div class="line-field d-flex align-items-center"><span class="device-name">HUAWEI_P8_lite</span><button type="button" class="plain-btn" aria-label="Edit name"><svg width="26" height="26" viewBox="0 0 26 26"><path d="M4 15L18 1l7 3L11 19z" fill="#999"/><path d="M0 17l5 5-5 1z" fill="#888"/><path d="M0 23h24v3H0z" fill="#bbb"/></svg></button></div>
              </div>
              <div class="form-line gap-a">
                <label class="line-label boxed" for="h1">Internet Accessible At:</label>
                <div class="line-field d-flex">
                  <select class="time-select" id="h1"><option>19</option></select>
                  <select class="time-select minute" aria-label="Start minute"><option>00</option></select>
                  <span class="tilde">~</span>
                  <select class="time-select" aria-label="End hour"><option>21</option></select>
                  <select class="time-select minute" aria-label="End minute"><option>00</option></select>
                </div>
              </div>
              <div class="form-line gap-b">
                <div class="line-label choice">In:</div>
                <div class="line-field">
                  <div class="mode-row">
                    <label class="pick"><input type="radio" name="days" checked>Every Day</label>
                    <label class="pick"><input type="radio" name="days">Specified Day</label>
                  </div>
                  <div class="day-grid">
                    <label class="pick"><input type="checkbox" checked disabled>Sun.</label>
                    <label class="pick"><input type="checkbox" checked disabled>Mon.</label>
                    <label class="pick"><input type="checkbox" checked disabled>Tue.</label>
                    <label class="pick"><input type="checkbox" checked disabled>Wed.</label>
                    <label class="pick"><input type="checkbox" checked disabled>Thur.</label>
                    <label class="pick"><input type="checkbox" checked disabled>Fri.</label>
                    <label class="pick"><input type="checkbox" checked disabled>Sat.</label>
                  </div>
                </div>
              </div>
              <div class="form-line gap-c">
                <label class="line-label" for="limit">Website Access Limit:</label>
                <div class="line-field"><input class="limit-switch" type="checkbox" role="switch" id="limit" checked></div>
              </div>
              <div class="form-line gap-d">
                <div class="line-label choice">Access Control Mode:</div>
                <div class="line-field mode-row">
                  <label class="pick"><input type="radio" name="mode" checked>Blacklist</label>
                  <label class="pick"><input type="radio" name="mode">Whitelist</label>
                </div>
              </div>
              <div class="form-line gap-e">
                <label class="line-label boxed" for="sites">Blocked Websites:</label>
                <div class="line-field">
                  <input class="site-box" type="text" id="sites" placeholder="Please enter keywords of websites.">
                  <p class="hint">Enter website keywords separated by a comma. For example, eHow,google indicates that the eHow and Google websites are inaccessible.</p>
                </div>
              </div>
              <button type="submit" class="save-btn">Save</button>
            </form>
            <div class="bar-track d-flex flex-column">
              <div class="track-end run-top"><svg width="8" height="10"><use href="#caret-up"/></svg></div>
              <div class="bar-thumb"></div>
              <div class="track-end short"><svg class="faint flip" width="8" height="10"><use href="#caret-up"/></svg></div>
            </div>
          </div>
        </section>
      </div>
      <svg class="pointer" width="28" height="40" viewBox="0 0 28 40"><path d="M1.500 1v33l8-7 5.500 11 4-2-4.500-11h10.500z" fill="#fff" stroke="#111" stroke-width="1.500"/></svg>
    </div>
    <div class="bar-track d-flex flex-column">
      <div class="track-end"><svg class="faint" width="8" height="10"><use href="#caret-up"/></svg></div>
      <div class="bar-thumb"></div>
      <div class="track-end run-bottom"><svg class="flip" width="8" height="10"><use href="#caret-up"/></svg></div>
    </div>
  </div>
</div>
</body>
</html>
